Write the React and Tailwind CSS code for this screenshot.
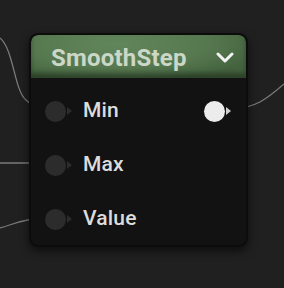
import React from 'react';

function Pin({ filled }) {
  return (
    <div className="relative flex items-center w-[30px] h-[22px]">
      <div className={`w-[21px] h-[21px] rounded-full ${filled ? 'bg-[#ececec]' : 'bg-[#2c2c2c]'}`} />
      <div
        className={`w-0 h-0 border-y-[4px] border-y-transparent border-l-[5px] ml-[1px] ${filled ? 'border-l-[#d0d0d0]' : 'border-l-[#2c2c2c]'}`}
      />
    </div>
  );
}

function Row({ label, output }) {
  return (
    <div className="flex items-center h-[54px] pl-[14px] pr-[12px]">
      <Pin />
      <span className="ml-[8px] text-[21px] font-medium text-[#dcdcdc] tracking-[0.2px]">{label}</span>
      <div className="flex-1" />
      {output && <Pin filled />}
    </div>
  );
}

export default function App() {
  return (
    <div
      className="relative w-[284px] h-[288px] overflow-hidden bg-[#202020]"
      style={{ fontFamily: 'Roboto, "Liberation Sans", sans-serif' }}
    >
      <svg className="absolute inset-0" width="284" height="288">
        <g stroke="#8a8a8a" strokeWidth="1.3" fill="none" opacity="0.85">
          <path d="M0 38 C 14 50, 14 90, 26 100 C 32 106, 38 108, 44 108" />
          <path d="M0 163 L 44 163" />
          <path d="M0 228 C 14 224, 26 218, 44 218" />
          <path d="M230 109 C 255 109, 268 98, 284 84" />
        </g>
      </svg>

      <div className="absolute left-[29px] top-[33px] w-[219px] h-[214px] rounded-[9px] bg-[#121212] border-[2px] border-[#0c0c0c] shadow-[0_4px_10px_rgba(0,0,0,0.6)] overflow-hidden">
        <div className="flex items-center h-[43px] pl-[20px] pr-[12px] pt-[3px] bg-[radial-gradient(ellipse_at_40%_20%,#62865c_0%,#56784f_50%,#44633f_80%),linear-gradient(180deg,#5a7b55,#33482f)] rounded-t-[7px] shadow-[inset_0_-5px_5px_rgba(0,0,0,0.35)]">
          <span className="text-[24px] font-bold text-[#cbd7c7] tracking-[0.2px]">SmoothStep</span>
          <div className="flex-1" />
          <svg width="18" height="12" viewBox="0 0 18 12">
            <path d="M2 2 L9 9 L16 2" stroke="#f2f2f2" strokeWidth="3" fill="none" strokeLinecap="round" strokeLinejoin="round" />
          </svg>
        </div>
        <div className="pt-[6px]">
          <Row label="Min" output />
          <Row label="Max" />
          <Row label="Value" />
        </div>
      </div>
    </div>
  );
}
